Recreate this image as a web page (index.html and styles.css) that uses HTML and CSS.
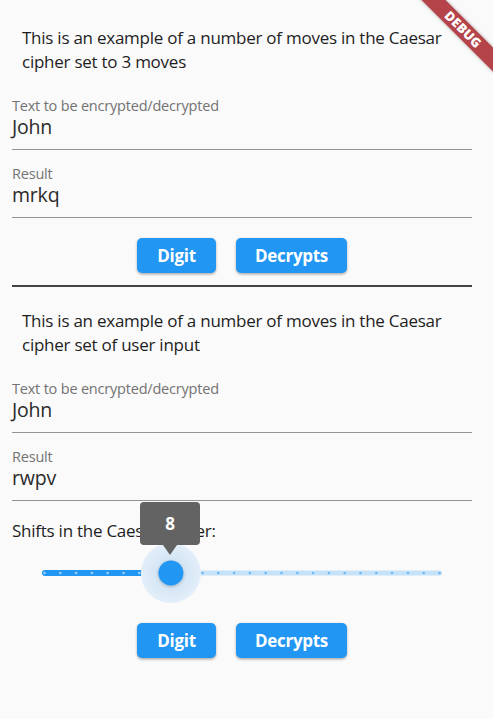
FILE: index.html
```html
<!DOCTYPE html>
<html>
<head>
<meta charset="utf-8">
<link rel="stylesheet" href="styles.css">
</head>
<body>
<div class="app">
  <div class="page">
    <section class="block">
      <p class="intro">This is an example of a number of moves in the Caesar cipher set to 3 moves</p>
      <div class="field first">
        <div class="label">Text to be encrypted/decrypted</div>
        <div class="value">John</div>
      </div>
      <div class="field">
        <div class="label">Result</div>
        <div class="value">mrkq</div>
      </div>
      <div class="actions">
        <button class="btn btn-digit">Digit</button>
        <button class="btn btn-decrypt">Decrypts</button>
      </div>
    </section>
    <hr class="divider">
    <section class="block">
      <p class="intro">This is an example of a number of moves in the Caesar cipher set of user input</p>
      <div class="field first">
        <div class="label">Text to be encrypted/decrypted</div>
        <div class="value">John</div>
      </div>
      <div class="field">
        <div class="label">Result</div>
        <div class="value">rwpv</div>
      </div>
      <div class="shift-label">Shifts in the Caesar cipher:</div>
      <div class="slider">
        <svg class="slider-svg" width="460" height="60" viewBox="0 0 460 60">
          <defs>
            <radialGradient id="ov" cx="0.5" cy="0.5" r="0.5">
              <stop offset="0" stop-color="#c4dbef"/>
              <stop offset="0.55" stop-color="#d7e7f5"/>
              <stop offset="1" stop-color="#e3eff9"/>
            </radialGradient>
            <filter id="sh" x="-50%" y="-50%" width="200%" height="200%">
              <feDropShadow dx="0" dy="1" stdDeviation="1.5" flood-color="#000" flood-opacity="0.25"/>
            </filter>
          </defs>
          <rect x="30" y="27.5" width="400" height="5" rx="2.5" fill="#c6e2f8"/>
          <rect x="30" y="27" width="132" height="6" rx="3" fill="#2196f3"/>
          <g id="ticks"></g>
          <circle cx="158.9" cy="30" r="30" fill="url(#ov)"/>
          <circle cx="158.9" cy="30" r="12.5" fill="#2196f3" filter="url(#sh)"/>
        </svg>
        <div class="indicator"><span>8</span></div>
      </div>
      <div class="actions">
        <button class="btn btn-digit">Digit</button>
        <button class="btn btn-decrypt">Decrypts</button>
      </div>
    </section>
  </div>
  <div class="banner">DEBUG</div>
</div>
<script>
  (function () {
    var g = document.getElementById('ticks');
    var ns = 'http://www.w3.org/2000/svg';
    for (var i = 0; i <= 25; i++) {
      var c = document.createElementNS(ns, 'circle');
      var x = 32.5 + i * 15.8;
      c.setAttribute('cx', x);
      c.setAttribute('cy', 30);
      c.setAttribute('r', 1.3);
      c.setAttribute('fill', i < 8 ? '#99cff9' : '#6db9f5');
      g.appendChild(c);
    }
  })();
</script>
</body>
</html>
```
FILE: styles.css
```css
html, body {
  margin: 0;
  padding: 0;
  background: #fafafa;
}

body {
  font-family: "Open Sans", "Noto Sans", sans-serif;
  color: #212121;
}

.app {
  position: relative;
  width: 493px;
  height: 719px;
  overflow: hidden;
  background: #fafafa;
}

.page {
  padding: 0 21px 0 12px;
}

.block {
  display: flex;
  flex-direction: column;
}

.intro {
  margin: 26px 0 0 0;
  padding: 0 10px;
  font-size: 17px;
  line-height: 24px;
  letter-spacing: -0.25px;
  color: #1e1e1e;
}

.divider + .block .intro {
  margin-top: 22px;
}

.field {
  margin-top: 15px;
  padding-bottom: 10px;
  border-bottom: 1px solid #949494;
}

.field.first {
  margin-top: 23px;
}

.label {
  font-size: 14.5px;
  line-height: 18px;
  color: #737373;
  letter-spacing: -0.2px;
}

.value {
  font-size: 19.5px;
  line-height: 24px;
  color: #2a2a2a;
  letter-spacing: -0.2px;
}

.actions {
  display: flex;
  justify-content: center;
  gap: 20px;
  margin-top: 19px;
}

.btn {
  height: 35px;
  border: none;
  border-radius: 5px;
  background: #2196f3;
  color: #ffffff;
  font-family: "Open Sans", "Noto Sans", sans-serif;
  font-weight: 700;
  font-size: 17px;
  letter-spacing: -0.3px;
  padding: 0;
  box-shadow: 0 1px 3px rgba(0, 0, 0, 0.25), 0 2px 2px rgba(0, 0, 0, 0.1);
}

.btn-digit {
  width: 79px;
}

.btn-decrypt {
  width: 111px;
}

.divider {
  margin: 12px 0 0 0;
  border: none;
  height: 2px;
  background: #444444;
}

.shift-label {
  margin-top: 18px;
  font-size: 17px;
  line-height: 24px;
  letter-spacing: -0.25px;
  color: #1e1e1e;
}

.slider {
  position: relative;
  height: 60px;
}

.slider-svg {
  display: block;
}

.indicator {
  position: absolute;
  left: 128px;
  top: -41px;
  width: 60px;
  height: 43px;
  background: #636363;
  border-radius: 4px;
  display: flex;
  align-items: center;
  justify-content: center;
  color: #ffffff;
  font-weight: 700;
  font-size: 17px;
}

.indicator::after {
  content: "";
  position: absolute;
  left: 23px;
  top: 43px;
  border-left: 7px solid transparent;
  border-right: 7px solid transparent;
  border-top: 10px solid #636363;
}

.actions:last-child {
  margin-top: 20px;
}

.banner {
  position: absolute;
  left: 411px;
  top: 20.5px;
  width: 104px;
  height: 17px;
  transform: rotate(45deg);
  background: #b4434a;
  box-shadow: 0 0 4px rgba(0, 0, 0, 0.3);
  color: #ffffff;
  font-family: "Open Sans", sans-serif;
  font-weight: 800;
  font-size: 13px;
  line-height: 17px;
  text-align: center;
  letter-spacing: 0.2px;
}
```
